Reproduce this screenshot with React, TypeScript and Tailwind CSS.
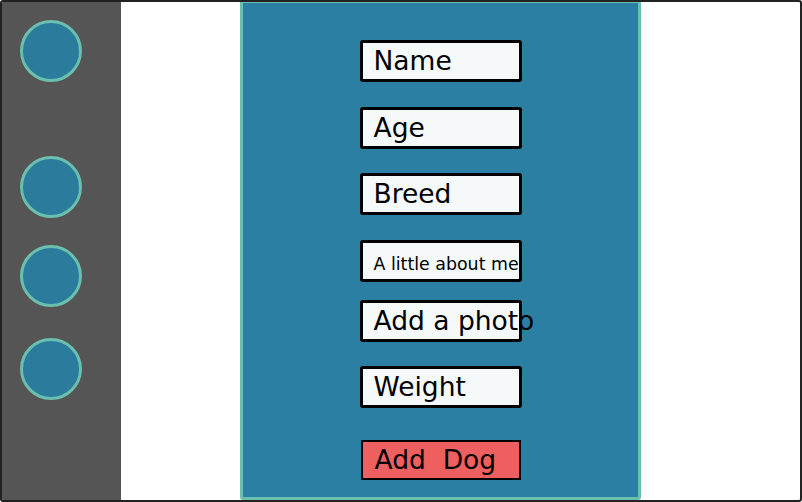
import * as React from "react"

const Field: React.FC<{ label: string; className?: string; small?: boolean }> = ({ label, className, small }) => {
    return (
        <div
            className={
                "w-[162px] h-[42px] border-[3px] border-black rounded-[3px] bg-[#f5f9fa] flex items-center pl-[11px] whitespace-nowrap leading-none text-black " +
                (small ? "text-[17.4px] pt-[7px] " : "text-[26.5px] ") +
                (className ?? "")
            }
        >
            {label}
        </div>
    )
}

const Dot: React.FC<{ className?: string }> = ({ className }) => {
    return (
        <div className={"w-[62px] h-[62px] rounded-full border-[3px] border-[#6bbfae] bg-[#2a7b9c] " + (className ?? "")} />
    )
}

const App: React.FC<{}> = () => {
    return (
        <div
            className="w-[802px] h-[502px] border-2 border-[#222222] rounded-[3px] bg-white flex overflow-hidden"
            style={{ fontFamily: '"DejaVu Sans", sans-serif' }}
        >
            <div className="w-[119px] h-full bg-[#555555] flex flex-col pl-[18px]">
                <Dot className="mt-[18px]" />
                <Dot className="mt-[74px]" />
                <Dot className="mt-[27px]" />
                <Dot className="mt-[31px]" />
            </div>
            <div className="w-[119px]" />
            <div className="w-[401px] h-[500px] -mt-[2px] border-[3px] border-[#6bbfae] rounded-[3px] bg-[#2b7fa3] flex flex-col items-center pt-[37px]">
                <Field label="Name" />
                <Field label="Age" className="mt-[25px]" />
                <Field label="Breed" className="mt-[24px]" />
                <Field label="A little about me" small className="mt-[25px]" />
                <Field label="Add a photo" className="mt-[18px]" />
                <Field label="Weight" className="mt-[24px]" />
                <div className="w-[160px] h-[40px] mt-[32px] border-2 border-black bg-[#ee5f5f] flex items-center pl-[12px] text-[26.5px] leading-none text-black whitespace-pre">
                    {"Add  Dog"}
                </div>
            </div>
        </div>
    )
}

export default App
